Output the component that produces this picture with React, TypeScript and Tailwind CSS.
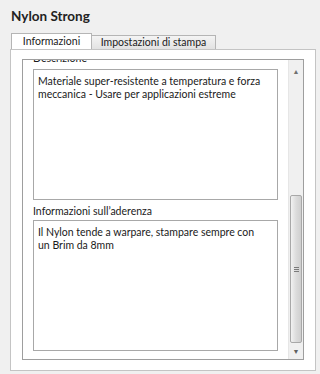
import React from 'react';

const font = { fontFamily: 'Lato, "Open Sans", sans-serif' };

function ScrollBar() {
    return (
        <div className="flex w-[15px] flex-col border-l border-[#e6e6e6] bg-[#f0f0f0]">
            <div className="flex h-[17px] items-end justify-center pb-[2px] text-[7px] leading-none text-[#707070]">
                ▲
            </div>
            <div className="flex-1" />
            <div className="mx-px flex h-[148px] items-center justify-center rounded-[2px] border border-[#a8a8a8] bg-gradient-to-r from-[#f2f2f2] via-[#dcdcdc] to-[#cfcfcf]">
                <div className="flex flex-col gap-[1px]">
                    <div className="h-px w-[5px] bg-[#7a7a7a]" />
                    <div className="h-px w-[5px] bg-[#7a7a7a]" />
                    <div className="h-px w-[5px] bg-[#7a7a7a]" />
                </div>
            </div>
            <div className="flex h-[16px] items-center justify-center text-[7px] leading-none text-[#606060]">
                ▼
            </div>
        </div>
    );
}

export default function App() {
    return (
        <div className="h-[374px] w-[320px] bg-[#f0f0f0] text-[#1a1a1a]" style={font}>
            <div className="px-[11px] pt-[7px] text-[13.5px] font-bold leading-[18px] text-[#222]">
                Nylon Strong
            </div>

            <div className="mt-[8px] flex pl-[11px]">
                <div className="relative z-10 -mb-px h-[16px] w-[81px] whitespace-nowrap border border-b-0 border-[#b5b5b5] bg-white text-center text-[10.5px] leading-[15px]">
                    Informazioni
                </div>
                <div className="mt-[2px] h-[14px] w-[124px] whitespace-nowrap border border-b-0 border-l-0 border-[#b5b5b5] bg-gradient-to-b from-[#f4f4f4] to-[#e2e2e2] text-center text-[10.5px] leading-[13px]">
                    Impostazioni di stampa
                </div>
            </div>

            <div className="ml-[10px] mr-[4px] h-[322px] border border-[#c4c4c4] bg-white px-[11px] pb-[10px] pt-[9px]">
                <div className="flex h-[301px] border border-[#9e9e9e] bg-white">
                    <div className="flex-1 overflow-hidden pl-[10px] pr-[10px]">
                        <div className="-mt-[8px] text-[10.5px] leading-[13px]">Descrizione</div>
                        <div className="mt-[4px] h-[131px] border border-[#a8a8a8] bg-white px-[4px] pt-[5px] text-[10.5px] leading-[13px]">
                            Materiale super-resistente a temperatura e forza meccanica - Usare per applicazioni estreme
                        </div>
                        <div className="mt-[4px] text-[10.5px] leading-[15px]">
                            Informazioni sull’aderenza
                        </div>
                        <div className="mt-[1px] h-[131px] border border-[#a8a8a8] bg-white px-[4px] pt-[5px] text-[10.5px] leading-[13px]">
                            Il Nylon tende a warpare, stampare sempre con
                            <br />
                            un Brim da 8mm
                        </div>
                    </div>
                    <ScrollBar />
                </div>
            </div>
        </div>
    );
}
